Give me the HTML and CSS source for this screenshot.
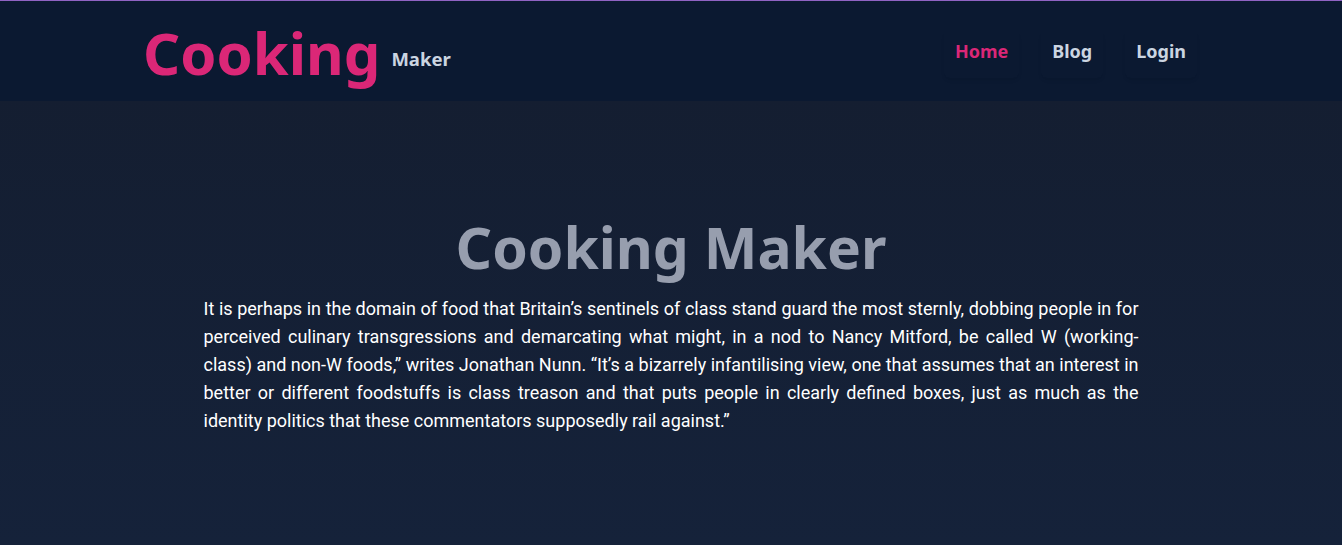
FILE: index.html
```html
<!DOCTYPE html>
<html lang="en">
<head>
<meta charset="utf-8">
<title>Cooking Maker</title>
<link rel="stylesheet" href="styles.css">
</head>
<body>
<header class="topbar">
  <div class="topbar-inner">
    <a class="brand" href="#"><span class="brand-main">Cooking</span><span class="brand-sub">Maker</span></a>
    <nav class="nav">
      <a class="nav-link active" href="#">Home</a>
      <a class="nav-link" href="#">Blog</a>
      <a class="nav-link" href="#">Login</a>
    </nav>
  </div>
</header>
<main class="hero">
  <h1 class="hero-title">Cooking Maker</h1>
  <p class="hero-text">It is perhaps in the domain of food that Britain’s sentinels of class stand guard the most sternly, dobbing people in for perceived culinary transgressions and demarcating what might, in a nod to Nancy Mitford, be called W (working-class) and non-W foods,” writes Jonathan Nunn. “It’s a bizarrely infantilising view, one that assumes that an interest in better or different foodstuffs is class treason and that puts people in clearly defined boxes, just as much as the identity politics that these commentators supposedly rail against.”</p>
</main>
</body>
</html>
```
FILE: styles.css
```css
* { box-sizing: border-box; }
html, body { margin: 0; padding: 0; }
body {
  font-family: "Noto Sans", "Open Sans", sans-serif;
  background: linear-gradient(180deg, #141d2f 0%, #15223a 100%);
  min-height: 545px;
  color: #fff;
}
.topbar {
  background: #0b1931;
  border-top: 1px solid #9063c3;
  height: 101px;
}
.topbar-inner {
  width: 1052px;
  margin: 0 auto;
  height: 100%;
  display: flex;
  align-items: center;
  justify-content: space-between;
}
.brand {
  display: flex;
  align-items: center;
  gap: 11px;
  text-decoration: none;
  margin-top: 4px;
  margin-left: -2px;
}
.brand-main {
  color: #db2777;
  font-size: 58px;
  font-weight: 700;
  line-height: 1;
}
.brand-sub {
  color: #cbd5e1;
  font-size: 18.5px;
  font-weight: 700;
  margin-top: 10px;
}
.nav {
  display: flex;
  gap: 22px;
  align-items: center;
  margin-top: 6px;
}
.nav-link {
  display: block;
  padding: 9px 11px 15px;
  font-size: 18px;
  font-weight: 700;
  color: #cbd5e1;
  text-decoration: none;
  border-radius: 6px;
  box-shadow: 0 3px 5px -1px rgba(0,0,0,0.06), 0 2px 3px -2px rgba(0,0,0,0.06);
}
.nav-link.active { color: #db2777; }
.hero {
  padding-top: 118px;
  display: flex;
  flex-direction: column;
  align-items: center;
}
.hero-title {
  margin: 0;
  font-size: 57px;
  font-weight: 700;
  line-height: 1;
  color: #979eae;
}
.hero-text {
  width: 935px;
  margin: 19px 0 0;
  font-family: "Roboto", "Noto Sans", sans-serif;
  font-size: 18px;
  line-height: 28px;
  text-align: justify;
  color: #fff;
}
```
